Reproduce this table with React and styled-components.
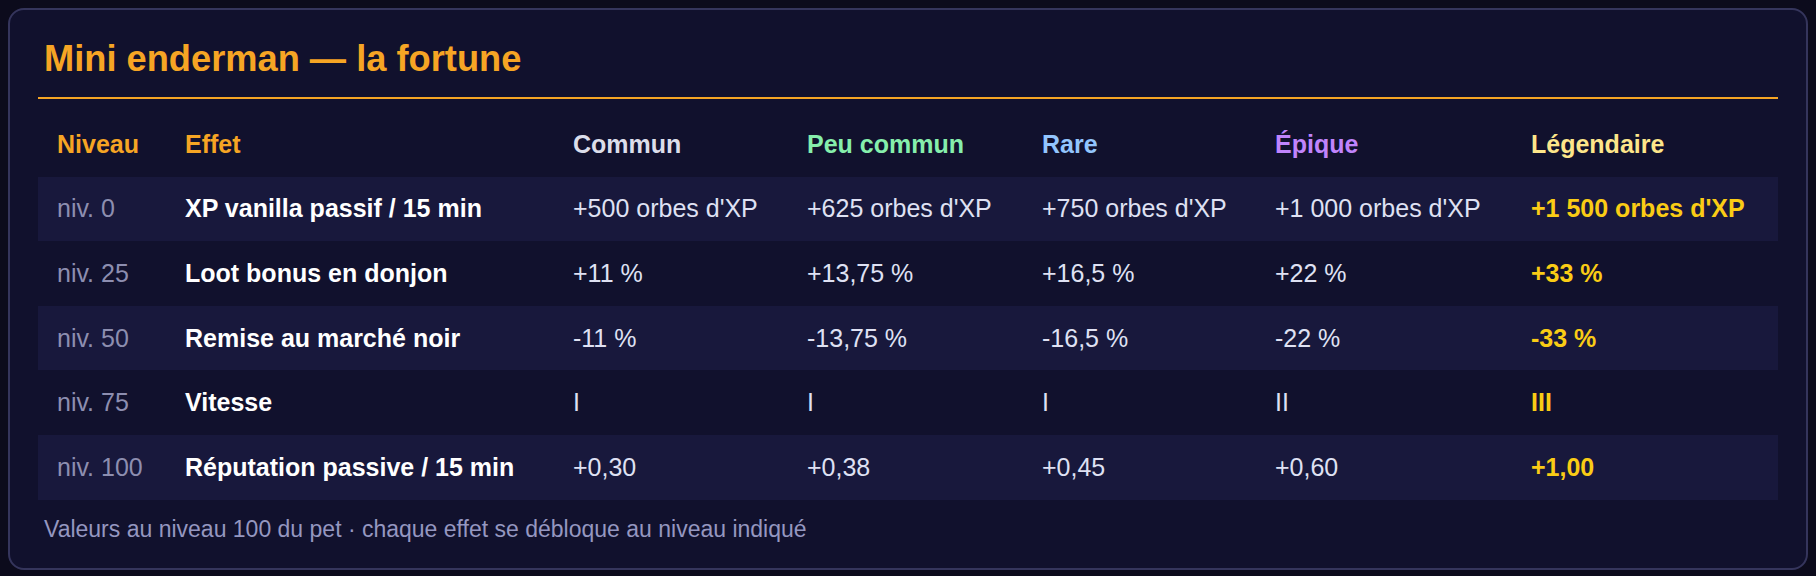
import React from "react";
import styled, { createGlobalStyle } from "styled-components";

const Global = createGlobalStyle`
  html, body { margin: 0; padding: 0; background: #0c0b1c; }
  body { padding: 8px; font-family: "Liberation Sans", Arial, sans-serif; }
`;

const Card = styled.section`
  box-sizing: border-box;
  width: 1800px;
  height: 562px;
  background: #11112d;
  border: 2px solid #35355c;
  border-radius: 16px;
  padding: 28px 28px 0 28px;
  display: flex;
  flex-direction: column;
`;

const Title = styled.h2`
  margin: 0;
  font-size: 36.25px;
  line-height: normal;
  font-weight: 700;
  color: #f6a524;
  padding: 0 0 17px 6px;
  border-bottom: 2px solid #f6a524;
`;

const Table = styled.table`
  margin-top: 13px;
  width: 1740px;
  border-collapse: collapse;
  table-layout: fixed;
  font-size: 25px;
`;

const Th = styled.th`
  text-align: left;
  font-weight: 700;
  padding: 17.8px 18px 17.8px 19px;
  line-height: normal;
  color: ${(p) => p.$color};
  white-space: nowrap;
`;

const Row = styled.tr`
  background: ${(p) => (p.$striped ? "#18183c" : "transparent")};
`;

const Td = styled.td`
  padding: 17.8px 18px 17.8px 19px;
  line-height: normal;
  white-space: nowrap;
  color: ${(p) =>
    p.$kind === "level"
      ? "#8d8eb0"
      : p.$kind === "effect"
      ? "#ffffff"
      : p.$kind === "legend"
      ? "#facc15"
      : "#dfe1f3"};
  font-weight: ${(p) => (p.$kind === "effect" || p.$kind === "legend" ? 700 : 400)};
`;

const Footer = styled.p`
  margin: 16px 0 0 6px;
  font-size: 23px;
  line-height: normal;
  color: #9597c0;
`;

const cols = [128, 388, 234, 235, 233, 256, 266];

const headers = [
  { label: "Niveau", color: "#f6a524" },
  { label: "Effet", color: "#f6a524" },
  { label: "Commun", color: "#dcdeea" },
  { label: "Peu commun", color: "#86efac" },
  { label: "Rare", color: "#93c5fd" },
  { label: "Épique", color: "#c084fc" },
  { label: "Légendaire", color: "#fde68a" },
];

const rows = [
  ["niv. 0", "XP vanilla passif / 15 min", "+500 orbes d'XP", "+625 orbes d'XP", "+750 orbes d'XP", "+1 000 orbes d'XP", "+1 500 orbes d'XP"],
  ["niv. 25", "Loot bonus en donjon", "+11 %", "+13,75 %", "+16,5 %", "+22 %", "+33 %"],
  ["niv. 50", "Remise au marché noir", "-11 %", "-13,75 %", "-16,5 %", "-22 %", "-33 %"],
  ["niv. 75", "Vitesse", "I", "I", "I", "II", "III"],
  ["niv. 100", "Réputation passive / 15 min", "+0,30", "+0,38", "+0,45", "+0,60", "+1,00"],
];

export default function App() {
  return (
    <>
      <Global />
      <Card>
        <Title>Mini enderman — la fortune</Title>
        <Table>
          <colgroup>
            {cols.map((w, i) => (
              <col key={i} style={{ width: w }} />
            ))}
          </colgroup>
          <thead>
            <tr>
              {headers.map((h) => (
                <Th key={h.label} $color={h.color}>
                  {h.label}
                </Th>
              ))}
            </tr>
          </thead>
          <tbody>
            {rows.map((r, i) => (
              <Row key={r[0]} $striped={i % 2 === 0}>
                {r.map((c, j) => (
                  <Td
                    key={j}
                    $kind={j === 0 ? "level" : j === 1 ? "effect" : j === 6 ? "legend" : "value"}
                  >
                    {c}
                  </Td>
                ))}
              </Row>
            ))}
          </tbody>
        </Table>
        <Footer>Valeurs au niveau 100 du pet · chaque effet se débloque au niveau indiqué</Footer>
      </Card>
    </>
  );
}
